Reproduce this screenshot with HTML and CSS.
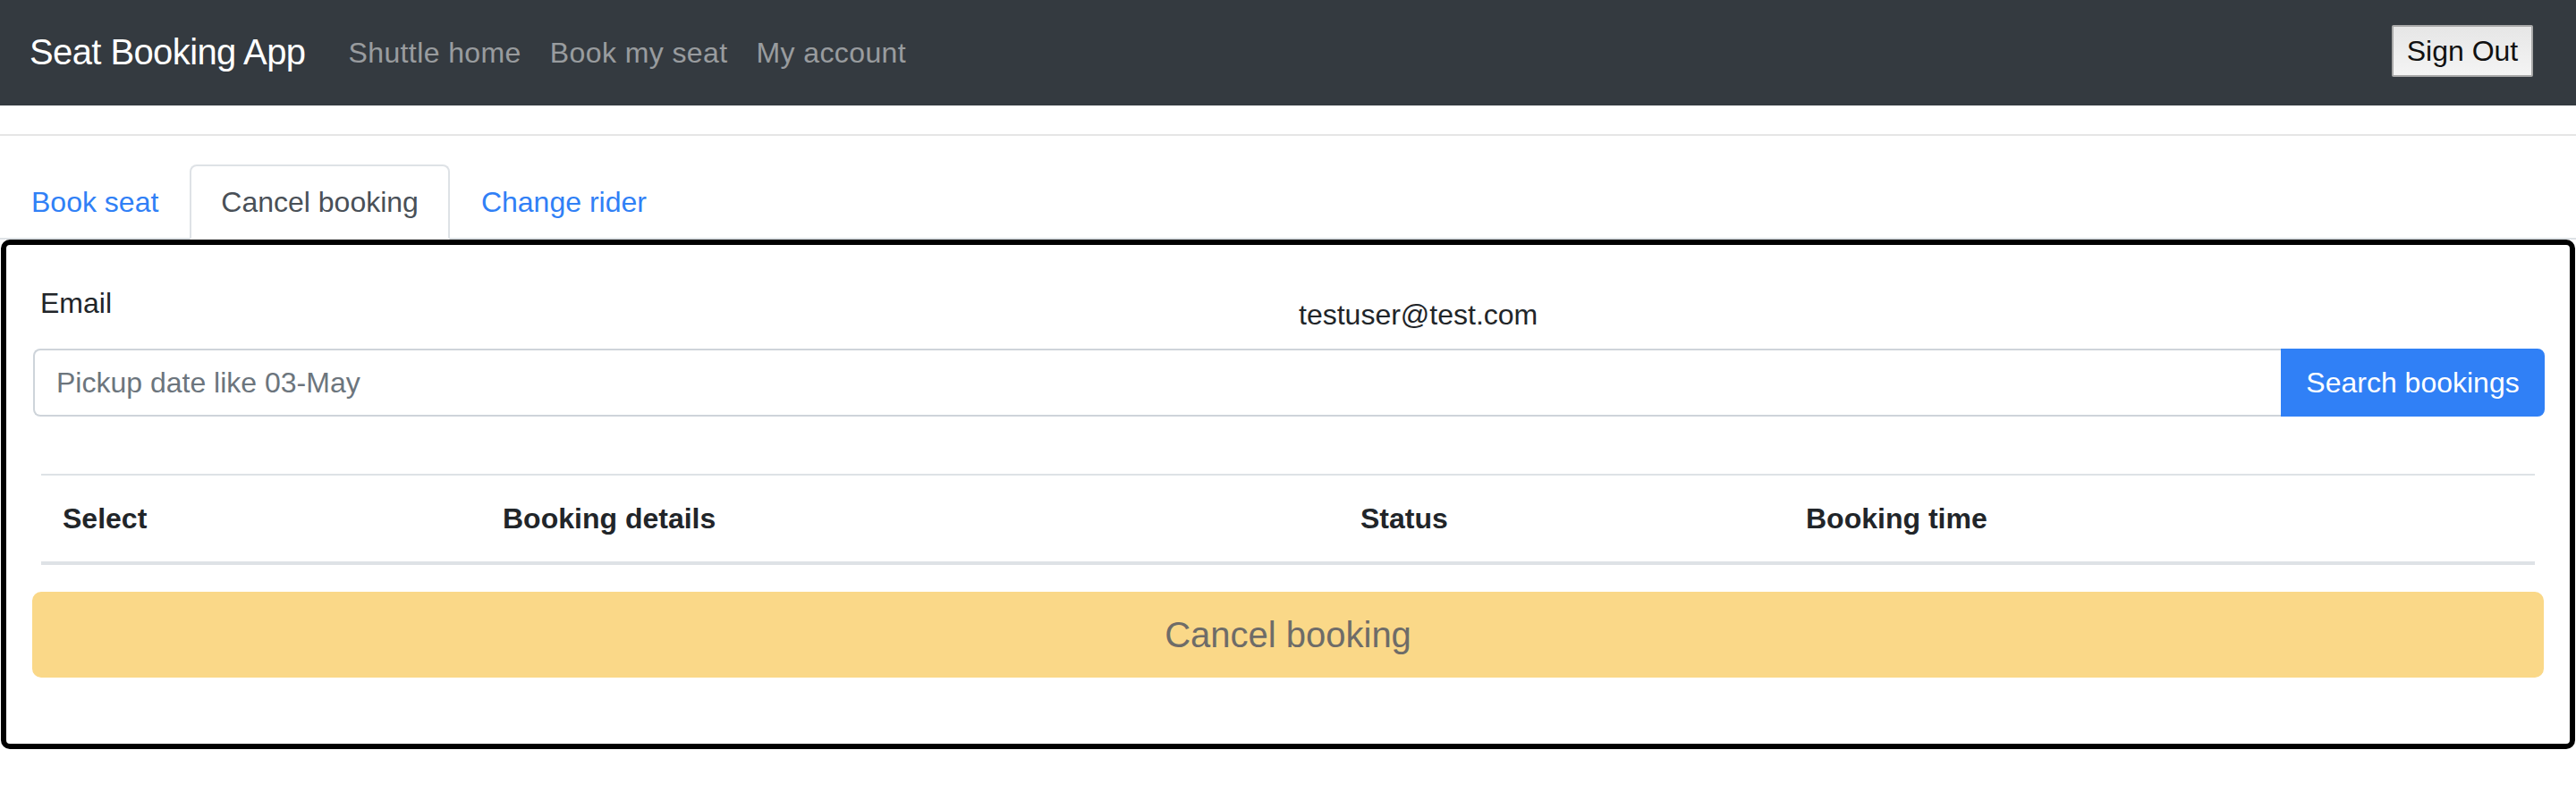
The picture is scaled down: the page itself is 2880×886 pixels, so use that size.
FILE: index.html
```html
<!DOCTYPE html>
<html lang="en">
<head>
<meta charset="utf-8">
<title>Seat Booking App</title>
<link rel="stylesheet" href="styles.css">
</head>
<body>
<nav class="navbar">
  <a class="brand" href="#">Seat Booking App</a>
  <a class="nav-link" href="#">Shuttle home</a>
  <a class="nav-link" href="#">Book my seat</a>
  <a class="nav-link" href="#">My account</a>
  <button class="sign-out" type="button">Sign Out</button>
</nav>
<hr class="divider">
<ul class="tabs">
  <li><a class="tab" href="#">Book seat</a></li>
  <li><a class="tab active" href="#">Cancel booking</a></li>
  <li><a class="tab" href="#">Change rider</a></li>
</ul>
<section class="panel">
  <div class="email-row">
    <label class="email-label">Email</label>
    <div class="email-value">testuser@test.com</div>
  </div>
  <div class="input-group">
    <input class="date-input" type="text" placeholder="Pickup date like 03-May">
    <button class="search-btn" type="button">Search bookings</button>
  </div>
  <table class="bookings">
    <thead>
      <tr>
        <th class="c-select">Select</th>
        <th class="c-details">Booking details</th>
        <th class="c-status">Status</th>
        <th class="c-time">Booking time</th>
      </tr>
    </thead>
    <tbody></tbody>
  </table>
  <button class="cancel-btn" type="button" disabled>Cancel booking</button>
</section>
</body>
</html>
```
FILE: styles.css
```css
* { box-sizing: border-box; }

html, body {
  margin: 0;
  padding: 0;
  background: #fff;
}

body {
  font-family: "Liberation Sans", Arial, sans-serif;
  font-size: 32px;
  line-height: 48px;
  color: #212529;
  width: 2880px;
  height: 886px;
  overflow: hidden;
}

a { text-decoration: none; }

.navbar {
  display: flex;
  align-items: center;
  height: 118px;
  padding: 0 48px 0 33px;
  background: #343a40;
}

.brand {
  font-size: 40px;
  line-height: 60px;
  letter-spacing: -0.6px;
  color: #fff;
  margin-right: 32px;
  margin-top: -2px;
}

.nav-link {
  padding: 0 16px;
  color: rgba(255, 255, 255, 0.5);
  line-height: 48px;
  letter-spacing: 0.4px;
}

.sign-out {
  margin-left: auto;
  margin-top: -4px;
  height: 58px;
  width: 158px;
  padding: 0;
  font-family: "Liberation Sans", Arial, sans-serif;
  font-size: 32px;
  color: #111;
  background: linear-gradient(#e6e6e6, #f4f4f4);
  border: 2px solid #a9a9a9;
  border-radius: 2px;
}

.divider {
  margin: 32px 0 0;
  border: 0;
  border-top: 2px solid rgba(0, 0, 0, 0.1);
  height: 0;
}

.tabs {
  display: flex;
  list-style: none;
  margin: 32px 0 0;
  padding: 0;
  border-bottom: 2px solid #dee2e6;
}

.tabs li { margin-bottom: -2px; }

.tab {
  display: block;
  padding: 16px 33px;
  border: 2px solid transparent;
  border-radius: 8px 8px 0 0;
  color: #3080f6;
  line-height: 48px;
}

.tab.active {
  color: #495057;
  background: #fff;
  border-color: #dee2e6 #dee2e6 #fff;
}

.panel {
  margin: 0 1px;
  border: 6px solid #000;
  border-radius: 10px;
  padding: 41px 29px 74px;
}

.email-row {
  display: grid;
  grid-template-columns: 1416px 1fr;
  align-items: start;
}

.email-label {
  padding-left: 9px;
  line-height: 48px;
}

.email-value {
  margin-top: 13px;
  line-height: 48px;
}

.input-group {
  display: flex;
  height: 76px;
  margin-top: 14px;
}

.date-input {
  flex: 1;
  min-width: 0;
  height: 76px;
  margin-left: 1px;
  padding: 12px 24px;
  font-family: "Liberation Sans", Arial, sans-serif;
  font-size: 32px;
  color: #495057;
  border: 2px solid #ced4da;
  border-right: 0;
  border-radius: 8px 0 0 8px;
  outline: none;
}

.date-input::placeholder { color: #6c757d; }

.search-btn {
  width: 295px;
  height: 76px;
  margin-right: -1px;
  padding: 0;
  font-family: "Liberation Sans", Arial, sans-serif;
  font-size: 32px;
  color: #fff;
  background: #3080f6;
  border: 2px solid #3080f6;
  border-radius: 0 8px 8px 0;
}

.bookings {
  width: calc(100% - 20px);
  margin: 64px 10px 30px;
  border-collapse: collapse;
}

.bookings th {
  padding: 24px;
  text-align: left;
  font-weight: bold;
  line-height: 48px;
  border-top: 2px solid #dee2e6;
  border-bottom: 4px solid #dee2e6;
}

.c-select { width: 492px; }
.c-details { width: 959px; }
.c-status { width: 498px; }

.cancel-btn {
  display: block;
  width: 100%;
  height: 96px;
  padding: 0;
  font-family: "Liberation Sans", Arial, sans-serif;
  font-size: 40px;
  color: #6e6c68;
  background: #fad888;
  border: 2px solid #fad888;
  border-radius: 10px;
}
```
